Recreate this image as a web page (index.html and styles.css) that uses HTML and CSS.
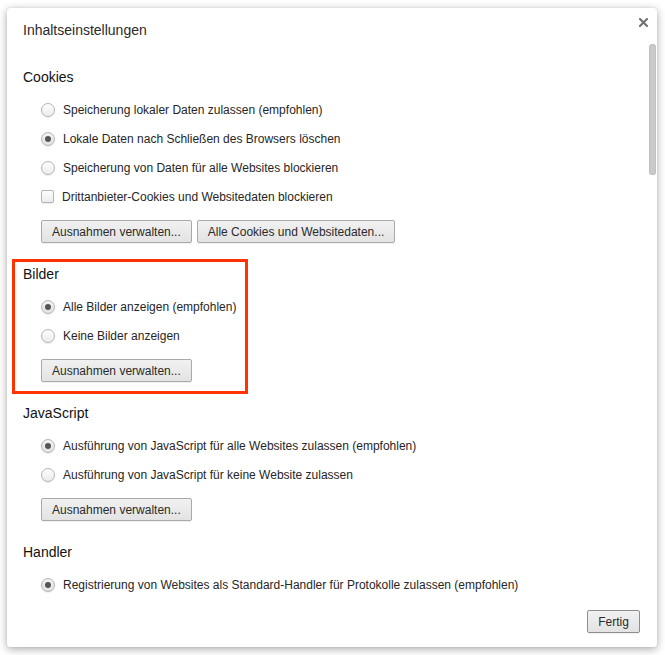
FILE: index.html
```html
<!DOCTYPE html>
<html lang="de">
<head>
<meta charset="utf-8">
<title>Inhaltseinstellungen</title>
<link rel="stylesheet" href="styles.css">
</head>
<body>
<div class="dialog">
  <div class="close" aria-label="Schließen">
    <svg width="9" height="9" viewBox="0 0 9 9"><path d="M1 1 L8 8 M8 1 L1 8" stroke="#6f6f6f" stroke-width="2" stroke-linecap="square"/></svg>
  </div>
  <h1 class="title">Inhaltseinstellungen</h1>
  <div class="content">
    <div class="thumb"></div>
    <section class="section first">
      <h2 class="heading">Cookies</h2>
      <div class="row"><span class="radio"></span><span class="label">Speicherung lokaler Daten zulassen (empfohlen)</span></div>
      <div class="row"><span class="radio checked"></span><span class="label">Lokale Daten nach Schließen des Browsers löschen</span></div>
      <div class="row"><span class="radio"></span><span class="label">Speicherung von Daten für alle Websites blockieren</span></div>
      <div class="row"><span class="checkbox"></span><span class="label cb">Drittanbieter-Cookies und Websitedaten blockieren</span></div>
      <div class="buttons">
        <button class="btn">Ausnahmen verwalten...</button>
        <button class="btn">Alle Cookies und Websitedaten...</button>
      </div>
    </section>
    <section class="section highlight">
      <h2 class="heading">Bilder</h2>
      <div class="row"><span class="radio checked"></span><span class="label">Alle Bilder anzeigen (empfohlen)</span></div>
      <div class="row"><span class="radio"></span><span class="label">Keine Bilder anzeigen</span></div>
      <div class="buttons">
        <button class="btn">Ausnahmen verwalten...</button>
      </div>
    </section>
    <section class="section">
      <h2 class="heading">JavaScript</h2>
      <div class="row"><span class="radio checked"></span><span class="label">Ausführung von JavaScript für alle Websites zulassen (empfohlen)</span></div>
      <div class="row"><span class="radio"></span><span class="label">Ausführung von JavaScript für keine Website zulassen</span></div>
      <div class="buttons">
        <button class="btn">Ausnahmen verwalten...</button>
      </div>
    </section>
    <section class="section">
      <h2 class="heading">Handler</h2>
      <div class="row"><span class="radio checked"></span><span class="label">Registrierung von Websites als Standard-Handler für Protokolle zulassen (empfohlen)</span></div>
    </section>
  </div>
  <div class="footer">
    <button class="btn done">Fertig</button>
  </div>
</div>
</body>
</html>
```
FILE: styles.css
```css
html, body {
  margin: 0;
  padding: 0;
  background: #ffffff;
}
body {
  padding: 8px 8px 8px 7px;
  font-family: "Liberation Sans", Arial, sans-serif;
  color: #262626;
}
.dialog {
  position: relative;
  width: 650px;
  height: 639px;
  background: #fff;
  border-radius: 3px;
  box-shadow: 0 2px 9px rgba(0, 0, 0, 0.35), 0 0 1px rgba(0, 0, 0, 0.2);
  display: flex;
  flex-direction: column;
  overflow: hidden;
}
.close {
  position: absolute;
  top: 10px;
  right: 9px;
  width: 9px;
  height: 9px;
  line-height: 0;
}
.title {
  margin: 11px 0 0 16px;
  font-size: 14px;
  font-weight: normal;
  line-height: 22px;
  color: #2a2a2a;
}
.content {
  position: relative;
  flex: 1;
  padding-left: 16px;
  overflow: hidden;
}
.thumb {
  position: absolute;
  right: 1px;
  top: 3px;
  width: 7px;
  height: 131px;
  border-radius: 4px;
  background: #c9c9c9;
  box-shadow: inset 0 0 0 1px #c0c0c0;
}
.section {
  margin-top: 21px;
}
.section.first {
  margin-top: 26px;
}
.highlight {
  position: relative;
}
.highlight::before {
  content: "";
  position: absolute;
  left: -11px;
  top: -5px;
  width: 230px;
  height: 129px;
  border: 3px solid #ff3300;
}
.heading {
  margin: 0 0 7px;
  font-size: 14px;
  font-weight: normal;
  line-height: 21px;
  color: #111;
}
.row {
  height: 29px;
  display: flex;
  align-items: center;
  padding-left: 18px;
  font-size: 12px;
}
.radio {
  width: 12px;
  height: 12px;
  border-radius: 50%;
  border: 1px solid #b4b4b4;
  background: linear-gradient(#fdfdfd, #ececec);
  box-shadow: 0 1px 1px rgba(0, 0, 0, 0.08);
  display: flex;
  align-items: center;
  justify-content: center;
  flex: none;
}
.radio.checked {
  background: linear-gradient(#f2f2f2, #e2e2e2);
}
.radio.checked::after {
  content: "";
  width: 6px;
  height: 6px;
  border-radius: 50%;
  background: #555;
}
.checkbox {
  width: 11px;
  height: 11px;
  border-radius: 2px;
  border: 1px solid #b4b4b4;
  background: linear-gradient(#fdfdfd, #ececec);
  box-shadow: 0 1px 1px rgba(0, 0, 0, 0.08);
  flex: none;
}
.label {
  margin-left: 8px;
}
.label.cb {
  margin-left: 8px;
}
.buttons {
  margin-top: 9px;
  padding-left: 18px;
  display: flex;
  gap: 5px;
}
.btn {
  height: 23px;
  padding: 0 10px;
  font-family: "Liberation Sans", Arial, sans-serif;
  font-size: 12px;
  color: #2a2a2a;
  border: 1px solid #a9a9a9;
  border-radius: 2px;
  background: linear-gradient(#f1f1f1, #e3e3e3);
  box-shadow: 0 1px 0 rgba(0, 0, 0, 0.06);
}
.footer {
  display: flex;
  justify-content: flex-end;
  padding: 0 17px 14px 0;
}
.btn.done {
  width: 53px;
  padding: 0;
  border-color: #8e8e8e;
}
```
